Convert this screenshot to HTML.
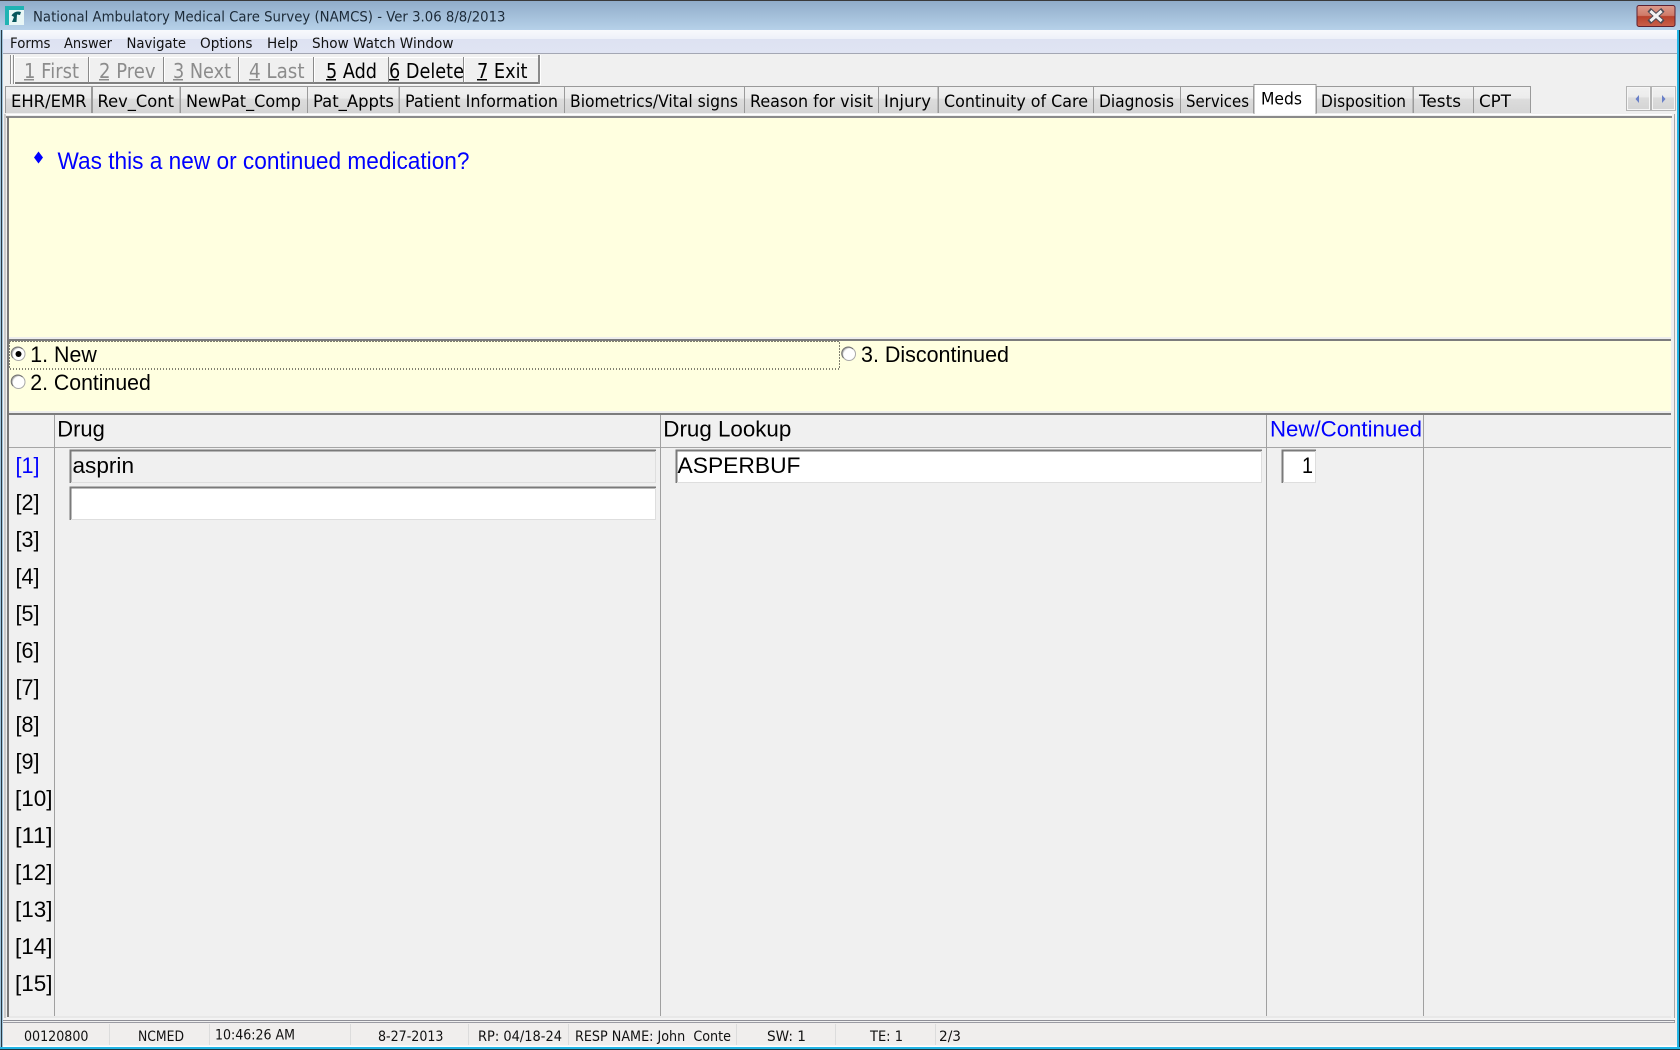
<!DOCTYPE html>
<html lang="en"><head><meta charset="utf-8"><title>NAMCS</title>
<style>
html,body{margin:0;padding:0;width:1680px;height:1050px;overflow:hidden;background:#fff}
svg{display:block}
.t{font-family:"DejaVu Sans",sans-serif;fill:#000}
.a{font-family:"Liberation Sans",Arial,sans-serif;fill:#000;font-size:22px}
.m{font-size:14px;fill:#111}
.tb{font-size:20px}
.dis{fill:#8c8c8c}
.tab{font-size:17px;fill:#000}
.st{font-size:14px;fill:#111}
</style></head><body>
<svg xmlns="http://www.w3.org/2000/svg" width="1680" height="1050" viewBox="0 0 1680 1050">
<defs>
<linearGradient id="title" x1="0" y1="0" x2="0" y2="1"><stop offset="0" stop-color="#8fabc8"/><stop offset="1" stop-color="#b6d1e9"/></linearGradient>
<linearGradient id="menu" x1="0" y1="0" x2="0" y2="1"><stop offset="0" stop-color="#f8fafd"/><stop offset=".38" stop-color="#eef1f9"/><stop offset=".4" stop-color="#dde2f2"/><stop offset="1" stop-color="#e0e4f3"/></linearGradient>
<linearGradient id="tab" x1="0" y1="0" x2="0" y2="1"><stop offset="0" stop-color="#f1f1f1"/><stop offset=".42" stop-color="#ececec"/><stop offset=".48" stop-color="#dcdcdc"/><stop offset="1" stop-color="#d4d4d4"/></linearGradient>
<linearGradient id="close" x1="0" y1="0" x2="0" y2="1"><stop offset="0" stop-color="#dc9a8c"/><stop offset=".48" stop-color="#cf7a68"/><stop offset=".52" stop-color="#b8412c"/><stop offset="1" stop-color="#c9614a"/></linearGradient>
<radialGradient id="radio" cx=".62" cy=".62" r=".72"><stop offset="0" stop-color="#fff"/><stop offset=".72" stop-color="#fff"/><stop offset="1" stop-color="#bcbcbc"/></radialGradient>
</defs>

<!-- window base -->
<rect width="1680" height="1050" fill="#f0f0f0"/>
<rect x="0" y="30" width="3" height="1020" fill="#9fc4dc"/>
<rect x="1" y="30" width="1" height="1020" fill="#2a3a44"/>
<rect x="1677" y="30" width="2" height="1020" fill="#22b4e4"/>
<rect x="1679" y="30" width="1" height="1020" fill="#1d3440"/>
<rect x="0" y="1047" width="1680" height="2" fill="#22b4e4"/>
<rect x="0" y="1049" width="1680" height="1" fill="#1d3440"/>

<!-- title bar -->
<rect width="1680" height="30" fill="url(#title)"/>
<rect width="1680" height="1" fill="#3a3a3a"/>
<rect x="5" y="6" width="19" height="19" fill="#1fb3b3"/>
<rect x="9" y="10" width="15" height="15" fill="#e8f6f6"/>
<path d="M11.500 15.500 Q15 10 21 12 L20 15 L17 14.500 L16.500 22 L12 22 L14 17 Z" fill="#06565c"/>
<text class="t m" x="33" y="21.500" textLength="472.500" lengthAdjust="spacingAndGlyphs" style="fill:#1c2a38">National Ambulatory Medical Care Survey (NAMCS) - Ver 3.06 8/8/2013</text>
<rect x="1637" y="5.500" width="38" height="21" rx="2" fill="url(#close)" stroke="#5c2030"/>
<path d="M1651 11.500 L1661 20.500 M1661 11.500 L1651 20.500" stroke="#4a4a54" stroke-width="5" stroke-linecap="square"/>
<path d="M1651.500 12 L1660.500 20 M1660.500 12 L1651.500 20" stroke="#f2f2f2" stroke-width="3" stroke-linecap="square"/>

<!-- menu bar -->
<rect x="3" y="30" width="1674" height="23" fill="url(#menu)"/>
<rect x="3" y="53" width="1674" height="1" fill="#a4a7b4"/>
<g class="t m">
<text x="10" y="48" textLength="40.500" lengthAdjust="spacingAndGlyphs">Forms</text>
<text x="64" y="48" textLength="48" lengthAdjust="spacingAndGlyphs">Answer</text>
<text x="126.500" y="48" textLength="59.500" lengthAdjust="spacingAndGlyphs">Navigate</text>
<text x="200" y="48" textLength="52.500" lengthAdjust="spacingAndGlyphs">Options</text>
<text x="267" y="48" textLength="31" lengthAdjust="spacingAndGlyphs">Help</text>
<text x="312" y="48" textLength="141.500" lengthAdjust="spacingAndGlyphs">Show Watch Window</text>
</g>

<!-- toolbar -->
<rect x="10" y="55" width="1" height="29" fill="#909090"/><rect x="11" y="55" width="1" height="29" fill="#fff"/>
<rect x="13" y="55" width="1" height="29" fill="#909090"/><rect x="14" y="55" width="1" height="29" fill="#fff"/>
<rect x="15" y="57" width="524" height="26" fill="#f0f0f0"/>
<rect x="15" y="57" width="524" height="1" fill="#fff"/>
<rect x="15" y="82" width="524" height="2" fill="#808080"/>
<rect x="15" y="84" width="526" height="1" fill="#fafafa"/>

<g class="t tb">
<text class="t tb dis" x="24" y="78" textLength="55" lengthAdjust="spacingAndGlyphs">1 First</text>
<text class="t tb dis" x="99" y="78" textLength="56.500" lengthAdjust="spacingAndGlyphs">2 Prev</text>
<text class="t tb dis" x="173" y="78" textLength="58" lengthAdjust="spacingAndGlyphs">3 Next</text>
<text class="t tb dis" x="249" y="78" textLength="55.500" lengthAdjust="spacingAndGlyphs">4 Last</text>
<text class="t tb" x="326" y="78" textLength="51" lengthAdjust="spacingAndGlyphs">5 Add</text>
<text class="t tb" x="389" y="78" textLength="75" lengthAdjust="spacingAndGlyphs">6 Delete</text>
<text class="t tb" x="477" y="78" textLength="50.500" lengthAdjust="spacingAndGlyphs">7 Exit</text>
</g>
<g fill="#8a8a8a">
<rect x="88" y="57" width="1" height="26"/><rect x="163" y="57" width="1" height="26"/><rect x="238" y="57" width="1" height="26"/><rect x="313" y="57" width="1" height="26"/><rect x="388" y="57" width="1" height="26"/><rect x="463" y="57" width="1" height="26"/><rect x="538" y="55" width="2" height="29"/>
</g>
<g fill="#fff">
<rect x="89" y="58" width="1" height="24"/><rect x="164" y="58" width="1" height="24"/><rect x="239" y="58" width="1" height="24"/><rect x="314" y="58" width="1" height="24"/><rect x="464" y="58" width="1" height="24"/><rect x="540" y="55" width="1" height="30"/>
</g>
<g fill="#8c8c8c"><rect x="24" y="79" width="10" height="1.500"/><rect x="99" y="79" width="10" height="1.500"/><rect x="173" y="79" width="10" height="1.500"/><rect x="249" y="79" width="11" height="1.500"/></g>
<g fill="#000"><rect x="326" y="79" width="10" height="1.500"/><rect x="389" y="79" width="10" height="1.500"/><rect x="477" y="79" width="10" height="1.500"/></g>

<!-- tabs -->
<g fill="url(#tab)" stroke="#9a9a9a" stroke-width="1">
<rect x="5.500" y="86.500" width="86" height="27"/>
<rect x="92.500" y="86.500" width="87.500" height="27"/>
<rect x="180.500" y="86.500" width="127" height="27"/>
<rect x="307.500" y="86.500" width="91.500" height="27"/>
<rect x="399.500" y="86.500" width="165" height="27"/>
<rect x="564.500" y="86.500" width="180" height="27"/>
<rect x="744.500" y="86.500" width="134" height="27"/>
<rect x="878.500" y="86.500" width="59.500" height="27"/>
<rect x="938.500" y="86.500" width="155" height="27"/>
<rect x="1093.500" y="86.500" width="87" height="27"/>
<rect x="1180.500" y="86.500" width="73" height="27"/>
<rect x="1316.500" y="86.500" width="96.500" height="27"/>
<rect x="1413.500" y="86.500" width="60" height="27"/>
<rect x="1473.500" y="86.500" width="57" height="27"/>
</g>

<!-- tab pane frame -->
<rect x="5" y="113" width="1672" height="905" fill="#f0f0f0"/>
<rect x="5" y="114" width="1667" height="1" fill="#fff"/>
<rect x="6" y="116" width="1666" height="2" fill="#8a8a8a"/>
<rect x="4.500" y="114" width="1" height="906" fill="#a8a8a8"/>
<rect x="7" y="117" width="2" height="900" fill="#787878"/>
<rect x="1674" y="114" width="1" height="908" fill="#a8a8a8"/>

<!-- active tab -->
<rect x="1254" y="84" width="62" height="31" fill="#fff"/>
<path d="M1254 114V84.500H1316V114" fill="none" stroke="#9a9a9a"/>

<g class="t tab">
<text class="t tab" x="11" y="107" textLength="75.500" lengthAdjust="spacingAndGlyphs">EHR/EMR</text>
<text class="t tab" x="97.500" y="107" textLength="76.500" lengthAdjust="spacingAndGlyphs">Rev_Cont</text>
<text class="t tab" x="186" y="107" textLength="115" lengthAdjust="spacingAndGlyphs">NewPat_Comp</text>
<text class="t tab" x="313" y="107" textLength="81" lengthAdjust="spacingAndGlyphs">Pat_Appts</text>
<text class="t tab" x="405" y="107" textLength="153" lengthAdjust="spacingAndGlyphs">Patient Information</text>
<text class="t tab" x="570" y="107" textLength="168" lengthAdjust="spacingAndGlyphs">Biometrics/Vital signs</text>
<text class="t tab" x="750" y="107" textLength="123" lengthAdjust="spacingAndGlyphs">Reason for visit</text>
<text class="t tab" x="884" y="107" textLength="47" lengthAdjust="spacingAndGlyphs">Injury</text>
<text class="t tab" x="944" y="107" textLength="144" lengthAdjust="spacingAndGlyphs">Continuity of Care</text>
<text class="t tab" x="1099" y="107" textLength="75" lengthAdjust="spacingAndGlyphs">Diagnosis</text>
<text class="t tab" x="1186" y="107" textLength="63" lengthAdjust="spacingAndGlyphs">Services</text>
<text class="t tab" x="1261" y="104.500" textLength="41" lengthAdjust="spacingAndGlyphs">Meds</text>
<text class="t tab" x="1321" y="107" textLength="85" lengthAdjust="spacingAndGlyphs">Disposition</text>
<text class="t tab" x="1419" y="107" textLength="42" lengthAdjust="spacingAndGlyphs">Tests</text>
<text class="t tab" x="1479" y="107" textLength="32" lengthAdjust="spacingAndGlyphs">CPT</text>
</g>

<!-- tab scroll buttons -->
<rect x="1626.500" y="86.500" width="24" height="24" fill="url(#tab)" stroke="#b4b4b4"/>
<rect x="1627.500" y="87.500" width="22" height="22" fill="none" stroke="#f6f6f6"/>
<rect x="1651.500" y="86.500" width="24" height="24" fill="url(#tab)" stroke="#b4b4b4"/>
<rect x="1652.500" y="87.500" width="22" height="22" fill="none" stroke="#f6f6f6"/>
<path d="M1639 95V103L1635.500 99Z" fill="#6a80c8"/>
<path d="M1662 95V103L1665.500 99Z" fill="#6a80c8"/>

<!-- question panel -->
<rect x="9" y="118" width="1662" height="219" fill="#ffffe0"/>
<rect x="9" y="337" width="1663" height="2" fill="#ededed"/>
<path d="M38.500 151.500L43 157.500L38.500 163.500L34 157.500Z" fill="#0000ff"/>
<text class="a" x="57.500" y="169" textLength="412" lengthAdjust="spacingAndGlyphs" style="font-size:24px;fill:#0000ff">Was this a new or continued medication?</text>

<!-- answer panel -->
<rect x="9" y="339" width="1662" height="2" fill="#7c7c7c"/>
<rect x="9" y="341" width="1662" height="70" fill="#ffffe0"/>
<rect x="9" y="411" width="1663" height="2" fill="#ededed"/>
<rect x="9.500" y="341.500" width="830" height="27.500" fill="none" stroke="#000" stroke-width="1" stroke-dasharray="1 2"/>
<circle cx="18.500" cy="354" r="6.500" fill="url(#radio)" stroke="#a8a8a8"/>
<path d="M13 358 A6.500 6.500 0 0 1 22.500 349" fill="none" stroke="#707070"/>
<circle cx="18.500" cy="354" r="3" fill="#000"/>
<circle cx="18.500" cy="382" r="6.500" fill="url(#radio)" stroke="#a8a8a8"/>
<path d="M13 386 A6.500 6.500 0 0 1 22.500 377" fill="none" stroke="#707070"/>
<circle cx="849" cy="354" r="6.500" fill="url(#radio)" stroke="#a8a8a8"/>
<path d="M843.500 358 A6.500 6.500 0 0 1 853 349" fill="none" stroke="#707070"/>
<text class="a" x="30.300" y="362" textLength="66.500" lengthAdjust="spacingAndGlyphs">1. New</text>
<text class="a" x="30.300" y="390" textLength="120.500" lengthAdjust="spacingAndGlyphs">2. Continued</text>
<text class="a" x="861" y="362" textLength="148" lengthAdjust="spacingAndGlyphs">3. Discontinued</text>

<!-- grid -->
<rect x="9" y="413" width="1662" height="2" fill="#7c7c7c"/>
<rect x="9" y="415" width="1662" height="602" fill="#f0f0f0"/>
<rect x="9" y="447" width="1662" height="1" fill="#a6a6a6"/>
<rect x="54" y="415" width="1" height="601" fill="#a0a0a0"/>
<rect x="660" y="415" width="1" height="601" fill="#a0a0a0"/>
<rect x="1266" y="415" width="1" height="601" fill="#a0a0a0"/>
<rect x="1423" y="415" width="1" height="601" fill="#a0a0a0"/>
<text class="a" x="57.300" y="436.500" textLength="47.500" lengthAdjust="spacingAndGlyphs">Drug</text>
<text class="a" x="663.300" y="436.500" textLength="128" lengthAdjust="spacingAndGlyphs">Drug Lookup</text>
<text class="a" x="1270" y="436.500" textLength="152" lengthAdjust="spacingAndGlyphs" style="fill:#0000ff">New/Continued</text>

<g class="a">
<text class="a" x="15.500" y="473" textLength="24" lengthAdjust="spacingAndGlyphs" style="fill:#0000ff">[1]</text>
<text class="a" x="15.500" y="510" textLength="24" lengthAdjust="spacingAndGlyphs">[2]</text>
<text class="a" x="15.500" y="547" textLength="24" lengthAdjust="spacingAndGlyphs">[3]</text>
<text class="a" x="15.500" y="584" textLength="24" lengthAdjust="spacingAndGlyphs">[4]</text>
<text class="a" x="15.500" y="621" textLength="24" lengthAdjust="spacingAndGlyphs">[5]</text>
<text class="a" x="15.500" y="658" textLength="24" lengthAdjust="spacingAndGlyphs">[6]</text>
<text class="a" x="15.500" y="695" textLength="24" lengthAdjust="spacingAndGlyphs">[7]</text>
<text class="a" x="15.500" y="732" textLength="24" lengthAdjust="spacingAndGlyphs">[8]</text>
<text class="a" x="15.500" y="769" textLength="24" lengthAdjust="spacingAndGlyphs">[9]</text>
<text class="a" x="15" y="806" textLength="37.500" lengthAdjust="spacingAndGlyphs">[10]</text>
<text class="a" x="15" y="843" textLength="37.500" lengthAdjust="spacingAndGlyphs">[11]</text>
<text class="a" x="15" y="880" textLength="37.500" lengthAdjust="spacingAndGlyphs">[12]</text>
<text class="a" x="15" y="917" textLength="37.500" lengthAdjust="spacingAndGlyphs">[13]</text>
<text class="a" x="15" y="954" textLength="37.500" lengthAdjust="spacingAndGlyphs">[14]</text>
<text class="a" x="15" y="991" textLength="37.500" lengthAdjust="spacingAndGlyphs">[15]</text>
</g>

<!-- inputs -->
<rect x="70" y="450" width="586" height="33" fill="#f0f0f0"/>
<path d="M70.500 483V450.500H656" fill="none" stroke="#7a7a7a" stroke-width="2"/>
<path d="M71 482.500H655.500V451" fill="none" stroke="#dedede"/>
<rect x="70" y="487" width="586" height="33" fill="#fff"/>
<path d="M70.500 520V487.500H656" fill="none" stroke="#7a7a7a" stroke-width="2"/>
<path d="M71 519.500H655.500V488" fill="none" stroke="#dedede"/>
<rect x="676" y="450" width="586" height="33" fill="#fff"/>
<path d="M676.500 483V450.500H1262" fill="none" stroke="#7a7a7a" stroke-width="2"/>
<path d="M677 482.500H1261.500V451" fill="none" stroke="#dedede"/>
<rect x="1282" y="450" width="34" height="33" fill="#fff"/>
<path d="M1282.500 483V450.500H1316" fill="none" stroke="#7a7a7a" stroke-width="2"/>
<path d="M1283 482.500H1315.500V451" fill="none" stroke="#dedede"/>
<text class="a" x="72.500" y="473" textLength="61.500" lengthAdjust="spacingAndGlyphs">asprin</text>
<text class="a" x="677.500" y="473" textLength="123" lengthAdjust="spacingAndGlyphs">ASPERBUF</text>
<text class="a" x="1302" y="473" textLength="11" lengthAdjust="spacingAndGlyphs">1</text>

<!-- bottom frame -->
<rect x="9" y="1016" width="1662" height="2" fill="#e8e8e8"/>
<rect x="3" y="1018" width="1672" height="3" fill="#f4f4f4"/>
<rect x="3" y="1020" width="1672" height="1" fill="#8e8e96"/>
<rect x="3" y="1022" width="1672" height="1" fill="#9a9aa2"/>

<!-- status bar -->
<rect x="3" y="1023" width="1674" height="24" fill="#f0eeed"/>
<rect x="3" y="1045.500" width="1674" height="1.500" fill="#fff"/>
<g fill="#dcdcdc">
<rect x="109" y="1024" width="1" height="21"/><rect x="209" y="1024" width="1" height="21"/><rect x="350" y="1024" width="1" height="21"/><rect x="468" y="1024" width="1" height="21"/><rect x="568" y="1024" width="1" height="21"/><rect x="736" y="1024" width="1" height="21"/><rect x="835" y="1024" width="1" height="21"/><rect x="935" y="1024" width="1" height="21"/>
</g>
<g class="t st">
<text class="t st" x="24" y="1041" textLength="64.500" lengthAdjust="spacingAndGlyphs">00120800</text>
<text class="t st" x="138" y="1041" textLength="46" lengthAdjust="spacingAndGlyphs">NCMED</text>
<text class="t st" x="215" y="1039.500" textLength="80" lengthAdjust="spacingAndGlyphs">10:46:26 AM</text>
<text class="t st" x="378" y="1041" textLength="65.500" lengthAdjust="spacingAndGlyphs">8-27-2013</text>
<text class="t st" x="478" y="1041" textLength="84" lengthAdjust="spacingAndGlyphs">RP: 04/18-24</text>
<text class="t st" x="575" y="1041" textLength="156" lengthAdjust="spacingAndGlyphs" xml:space="preserve">RESP NAME: John  Conte</text>
<text class="t st" x="767" y="1041" textLength="39" lengthAdjust="spacingAndGlyphs">SW: 1</text>
<text class="t st" x="870" y="1041" textLength="33" lengthAdjust="spacingAndGlyphs">TE: 1</text>
<text class="t st" x="939" y="1041" textLength="22" lengthAdjust="spacingAndGlyphs">2/3</text>
</g>
</svg>
</body></html>
